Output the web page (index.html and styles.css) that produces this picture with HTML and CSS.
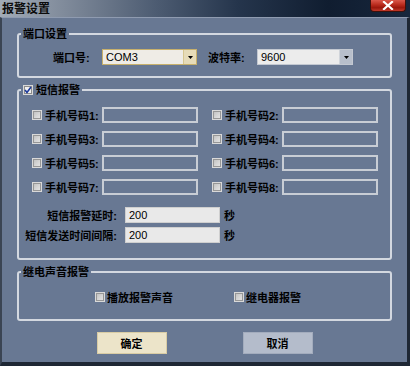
FILE: index.html
```html
<!DOCTYPE html>
<html>
<head>
<meta charset="utf-8">
<title>报警设置</title>
<link rel="stylesheet" href="styles.css">
</head>
<body>
<div class="window">
  <div class="titlebar">
    <span class="title">报警设置</span>
    <span class="close"><svg width="12" height="9" viewBox="0 0 12 9"><path d="M2 1 L10 8 M10 1 L2 8" stroke="#ffffff" stroke-width="2.2" stroke-linecap="square"/></svg></span>
  </div>
  <div class="client">
    <fieldset class="group g-port">
      <legend>端口设置</legend>
      <div class="port-row">
        <span class="lbl">端口号:</span>
        <div class="combo combo-gold"><span class="val">COM3</span><span class="drop"><svg width="5" height="3" viewBox="0 0 5 3"><path d="M0 0 H5 L2.5 3 Z" fill="#000"/></svg></span></div>
        <span class="lbl lbl2">波特率:</span>
        <div class="combo combo-gray"><span class="val">9600</span><span class="drop"><svg width="5" height="3" viewBox="0 0 5 3"><path d="M0 0 H5 L2.5 3 Z" fill="#000"/></svg></span></div>
      </div>
    </fieldset>

    <fieldset class="group g-sms">
      <legend><span class="cb checked"><svg width="8" height="8" viewBox="0 0 8 8"><path d="M1 4 L3 6.5 L7 1" fill="none" stroke="#1c3a9c" stroke-width="1.6"/></svg></span>短信报警</legend>
      <div class="phones">
        <div class="phone"><span class="cb"></span><span class="plbl">手机号码1:</span><span class="tbox"></span></div>
        <div class="phone"><span class="cb"></span><span class="plbl">手机号码2:</span><span class="tbox"></span></div>
        <div class="phone"><span class="cb"></span><span class="plbl">手机号码3:</span><span class="tbox"></span></div>
        <div class="phone"><span class="cb"></span><span class="plbl">手机号码4:</span><span class="tbox"></span></div>
        <div class="phone"><span class="cb"></span><span class="plbl">手机号码5:</span><span class="tbox"></span></div>
        <div class="phone"><span class="cb"></span><span class="plbl">手机号码6:</span><span class="tbox"></span></div>
        <div class="phone"><span class="cb"></span><span class="plbl">手机号码7:</span><span class="tbox"></span></div>
        <div class="phone"><span class="cb"></span><span class="plbl">手机号码8:</span><span class="tbox"></span></div>
      </div>
      <div class="delays">
        <div class="delay"><span class="dlbl">短信报警延时:</span><span class="dbox">200</span><span class="unit">秒</span></div>
        <div class="delay"><span class="dlbl">短信发送时间间隔:</span><span class="dbox">200</span><span class="unit">秒</span></div>
      </div>
    </fieldset>

    <fieldset class="group g-relay">
      <legend>继电声音报警</legend>
      <div class="relay-row">
        <span class="opt"><span class="cb"></span>播放报警声音</span>
        <span class="opt"><span class="cb"></span>继电器报警</span>
      </div>
    </fieldset>

    <div class="buttons">
      <span class="btn btn-ok">确定</span>
      <span class="btn btn-cancel">取消</span>
    </div>
  </div>
</div>
</body>
</html>
```

FILE: styles.css
```css
html, body {
  margin: 0;
  padding: 0;
}
body {
  width: 410px;
  height: 366px;
  overflow: hidden;
  font-family: "Liberation Sans", "Noto Sans CJK SC", sans-serif;
  font-size: 11px;
  color: #000;
}
.window {
  width: 410px;
  height: 366px;
  display: flex;
  flex-direction: column;
  background: #687893;
}
.titlebar {
  height: 17px;
  flex: none;
  display: flex;
  align-items: flex-start;
  background: linear-gradient(90deg, #a2abb7 0%, #7f8a9a 16%, #4d5c72 38%, #25354c 58%, #101d30 80%, #17273d 100%);
}
.title {
  font-size: 12px;
  font-weight: bold;
  line-height: 16px;
  margin-left: 2px;
  color: #0c0c0c;
  font-family: "Noto Sans CJK SC", sans-serif;
}
.close {
  margin-left: auto;
  margin-right: 4px;
  width: 36px;
  height: 12px;
  box-sizing: border-box;
  border: 1px solid #3e120c;
  border-top: none;
  border-radius: 0 0 4px 4px;
  background: linear-gradient(180deg, #d9574a 0%, #b82a1c 45%, #9a170c 70%, #c1392a 100%);
  display: flex;
  align-items: center;
  justify-content: center;
}
.close svg { display: block; }
.client {
  flex: 1;
  box-sizing: border-box;
  border-top: 1px solid #8f9bb0;
  border-left: 2px solid #3a4453;
  border-right: 3px solid #1e2734;
  border-bottom: 4px solid #1e2734;
  padding: 10px 15px 0 15px;
  display: flex;
  flex-direction: column;
}
.group {
  margin: 0;
  padding: 0;
  min-inline-size: 0;
  border: 2px solid #d3d8e0;
  border-radius: 3px;
}
.group legend {
  margin-left: 2px;
  padding: 0 2px;
  height: 12px;
  line-height: 12px;
  font-weight: bold;
  display: flex;
  align-items: center;
}
.g-sms, .g-relay {
  margin-top: 6px;
}
.port-row {
  display: flex;
  align-items: center;
  padding: 9px 0 11px 34px;
}
.lbl {
  width: 49px;
  font-weight: bold;
  white-space: nowrap;
}
.lbl2 {
  margin-left: 11px;
}
.combo {
  height: 16px;
  box-sizing: border-box;
  display: flex;
  align-items: stretch;
}
.combo .val {
  flex: 1;
  padding-left: 3px;
  line-height: 14px;
}
.combo .drop {
  width: 12px;
  display: flex;
  align-items: center;
  justify-content: center;
}
.combo-gold {
  width: 95px;
  border: 1px solid #c7b06c;
  background: #efece6;
}
.combo-gold .drop {
  background: #e6dbb8;
  border-left: 1px solid #d6c690;
}
.combo-gray {
  width: 96px;
  border: 1px solid #c3c8d1;
  background: #ececec;
}
.combo-gray .drop {
  background: #b8bfcb;
  border-left: 1px solid #d0d4da;
}
.cb {
  width: 10px;
  height: 10px;
  flex: none;
  box-sizing: border-box;
  border: 1px solid #d9d9d9;
  box-shadow: inset 0 0 0 1px #969696;
  background: linear-gradient(135deg, #bdbdbd 0%, #d8d8d8 60%, #e6e6e6 100%);
  display: flex;
  align-items: center;
  justify-content: center;
}
.cb.checked {
  background: #f0f0f0;
  box-shadow: inset 0 0 0 1px #8c8c8c;
  margin-right: 3px;
}
.cb svg { display: block; }
.phones {
  display: grid;
  grid-template-columns: 166px 166px;
  column-gap: 14px;
  row-gap: 8px;
  padding: 11px 0 0 13px;
}
.phone {
  display: flex;
  align-items: center;
  height: 16px;
}
.phone .cb {
  margin-right: 3px;
}
.plbl {
  width: 57px;
  font-weight: bold;
  white-space: nowrap;
}
.tbox {
  width: 96px;
  height: 16px;
  box-sizing: border-box;
  border: 2px solid #c8cdd5;
}
.delays {
  display: flex;
  flex-direction: column;
  gap: 4px;
  padding: 12px 0 15px 0;
}
.delay {
  display: flex;
  align-items: center;
  height: 16px;
}
.dlbl {
  width: 98px;
  margin-right: 8px;
  text-align: right;
  font-weight: bold;
  white-space: nowrap;
}
.dbox {
  width: 95px;
  height: 16px;
  box-sizing: border-box;
  border: 1px solid #cfcfcf;
  background: #e9e9e9;
  padding-left: 3px;
  line-height: 14px;
}
.unit {
  margin-left: 4px;
  font-weight: bold;
}
.relay-row {
  display: grid;
  grid-template-columns: 139px auto;
  padding: 13px 0 17px 76px;
}
.opt {
  display: flex;
  align-items: center;
  height: 11px;
  font-weight: bold;
  white-space: nowrap;
}
.opt .cb {
  margin-right: 2px;
}
.buttons {
  display: flex;
  justify-content: center;
  gap: 76px;
  margin-top: 11px;
}
.btn {
  width: 70px;
  height: 22px;
  box-sizing: border-box;
  display: flex;
  align-items: center;
  justify-content: center;
  font-weight: bold;
}
.btn-ok {
  background: #ece4c9;
  border: 1px solid #d9cca4;
}
.btn-cancel {
  background: #b4bccb;
  border: 1px solid #a3acbd;
}
```
